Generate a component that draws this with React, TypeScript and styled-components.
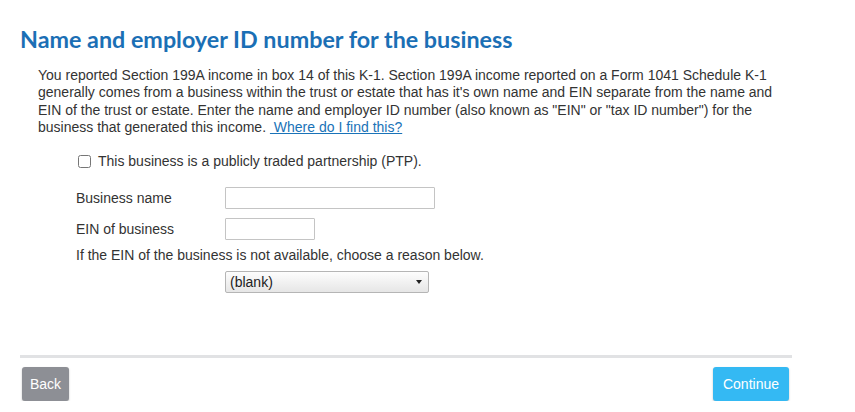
import React from "react";
import styled, { createGlobalStyle } from "styled-components";

const GlobalStyle = createGlobalStyle`
  html, body {
    margin: 0;
    padding: 0;
    background: #ffffff;
  }
  body {
    font-family: "Liberation Sans", Arial, sans-serif;
    color: #333333;
  }
`;

const Page = styled.div`
  width: 772px;
  padding: 24px 0 0 20px;
`;

const Heading = styled.h1`
  margin: 0 0 13px;
  font-family: "Lato", "Open Sans", sans-serif;
  font-weight: 700;
  font-size: 23.3px;
  line-height: 30px;
  color: #1b6fb5;
`;

const Intro = styled.p`
  margin: 0 0 0 18px;
  width: 740px;
  font-size: 14px;
  line-height: 17.3px;
  color: #333333;
`;

const HelpLink = styled.a`
  color: #1a73b8;
  text-decoration: underline;
  cursor: pointer;
`;

const Form = styled.div`
  padding-left: 56px;
  margin-top: 17px;
  display: flex;
  flex-direction: column;
`;

const CheckRow = styled.label`
  display: flex;
  align-items: center;
  gap: 7px;
  height: 16px;
  font-size: 14px;
  margin-left: 2px;
  margin-bottom: 18px;
`;

const Check = styled.input`
  width: 13px;
  height: 13px;
  margin: 0;
`;

const FieldRow = styled.div`
  display: grid;
  grid-template-columns: 149px auto;
  align-items: center;
  margin-bottom: 9px;
  font-size: 14px;
`;

const TextBox = styled.input<{ $w: number }>`
  width: ${(p) => p.$w}px;
  height: 22px;
  box-sizing: border-box;
  border: 1px solid #c4c4c4;
  border-radius: 1px;
  padding: 2px 4px;
  font-family: inherit;
  font-size: 13px;
`;

const Note = styled.div`
  font-size: 14px;
  line-height: 16px;
  margin-top: -2px;
`;

const SelectWrap = styled.div`
  margin: 8px 0 0 149px;
  width: 204px;
  height: 22px;
  box-sizing: border-box;
  border: 1px solid #b5b5b5;
  border-radius: 2px;
  background: linear-gradient(#fdfdfd, #e6e6e6);
  display: flex;
  align-items: center;
  justify-content: space-between;
  padding: 0 6px 0 4px;
  font-size: 14px;
  color: #222;
`;

const Caret = styled.span`
  width: 0;
  height: 0;
  border-left: 3.5px solid transparent;
  border-right: 3.5px solid transparent;
  border-top: 4px solid #222;
`;

const Footer = styled.div`
  margin-top: 62px;
  border-top: 3px solid #e1e2e4;
  padding-top: 9px;
  display: flex;
  justify-content: space-between;
`;

const Button = styled.button<{ $primary?: boolean }>`
  height: 34px;
  padding: 0 ${(p) => (p.$primary ? "10px" : "8px")};
  border: none;
  border-radius: 3px;
  font-family: "Liberation Sans Narrow", "Liberation Sans", Arial, sans-serif;
  font-size: 14px;
  color: #ffffff;
  background: ${(p) => (p.$primary ? "#34b9f3" : "#8d8f95")};
  box-shadow: 0 1px 2px rgba(0, 0, 0, 0.25);
  margin: 0 ${(p) => (p.$primary ? "3px" : "0")} 0 ${(p) => (p.$primary ? "0" : "2px")};
  cursor: pointer;
`;

export default function App() {
  return (
    <>
      <GlobalStyle />
      <Page>
        <Heading>Name and employer ID number for the business</Heading>
        <Intro>
          You reported Section 199A income in box 14 of this K-1. Section 199A income reported on a Form 1041 Schedule K-1
          generally comes from a business within the trust or estate that has it's own name and EIN separate from the name and
          EIN of the trust or estate. Enter the name and employer ID number (also known as "EIN" or "tax ID number") for the
          business that generated this income. <HelpLink>&nbsp;Where do I find this?</HelpLink>
        </Intro>
        <Form>
          <CheckRow>
            <Check type="checkbox" />
            This business is a publicly traded partnership (PTP).
          </CheckRow>
          <FieldRow>
            <span>Business name</span>
            <TextBox $w={210} />
          </FieldRow>
          <FieldRow>
            <span>EIN of business</span>
            <TextBox $w={90} />
          </FieldRow>
          <Note>If the EIN of the business is not available, choose a reason below.</Note>
          <SelectWrap>
            <span>(blank)</span>
            <Caret />
          </SelectWrap>
        </Form>
        <Footer>
          <Button>Back</Button>
          <Button $primary>Continue</Button>
        </Footer>
      </Page>
    </>
  );
}
